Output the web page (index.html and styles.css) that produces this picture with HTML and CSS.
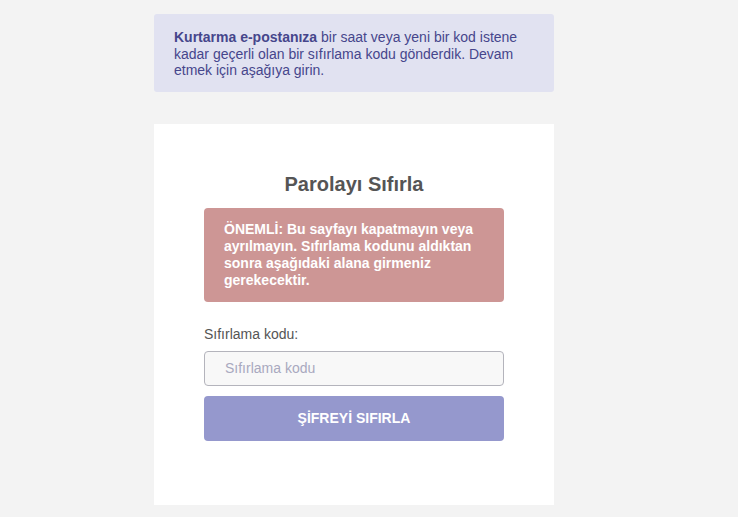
FILE: index.html
```html
<!DOCTYPE html>
<html lang="tr">

<head>
    <meta charset="UTF-8">
    <meta name="viewport" content="width=device-width, initial-scale=1.0">
    <title>Parolayı Sıfırla</title>
    <link rel="stylesheet" href="styles.css">
</head>

<body>

    <div class="container">
        <div class="notice">
            <strong>Kurtarma e-postanıza</strong> bir saat veya yeni bir kod istene kadar geçerli olan bir sıfırlama kodu gönderdik. Devam etmek için aşağıya girin.
        </div>

        <div class="card">
            <h2>Parolayı Sıfırla</h2>
            <div class="alert">
                ÖNEMLİ: Bu sayfayı kapatmayın veya ayrılmayın. Sıfırlama kodunu aldıktan sonra aşağıdaki alana girmeniz gerekecektir.
            </div>

            <label for="resetCode">Sıfırlama kodu:</label>
            <input type="text" id="resetCode" placeholder="Sıfırlama kodu">
            <button type="button">ŞİFREYİ SIFIRLA</button>
        </div>
    </div>

</body>

</html>
```

FILE: styles.css
```css
body {
    font-family: "Liberation Sans", Arial, sans-serif;
    font-size: 14px;
    margin: 0;
    background-color: #f3f3f3;
    color: #555;
}

.container {
    width: 400px;
    margin: 14px 0 0 154px;
}

.notice {
    background: #e1e2f1;
    color: #46468c;
    padding: 15px 20px 13px;
    line-height: 16.5px;
    border-radius: 3px;
}

.card {
    margin-top: 32px;
    background: #fff;
    padding: 48px 50px 64px;
}

h2 {
    margin: 0 0 12px;
    text-align: center;
    font-size: 20px;
    line-height: 24px;
    color: #555;
}

.alert {
    background: #cd9695;
    color: #fff;
    font-weight: bold;
    padding: 13px 20px;
    line-height: 17px;
    border-radius: 4px;
}

label {
    display: block;
    margin-top: 23px;
    line-height: 18px;
    color: #555;
}

input {
    display: block;
    box-sizing: border-box;
    width: 100%;
    height: 35px;
    margin-top: 8px;
    padding: 0 20px;
    border: 1px solid #b4b4bc;
    border-radius: 4px;
    background: #f8f8f8;
    font-family: inherit;
    font-size: 14px;
    color: #555;
}

input::placeholder {
    color: #a9a9bf;
}

button {
    display: block;
    width: 100%;
    height: 45px;
    margin-top: 10px;
    border: none;
    border-radius: 4px;
    background-color: #9598cd;
    color: #fff;
    font-family: inherit;
    font-size: 14px;
    font-weight: bold;
    cursor: pointer;
}

button:hover {
    background-color: #8589c4;
}
```
